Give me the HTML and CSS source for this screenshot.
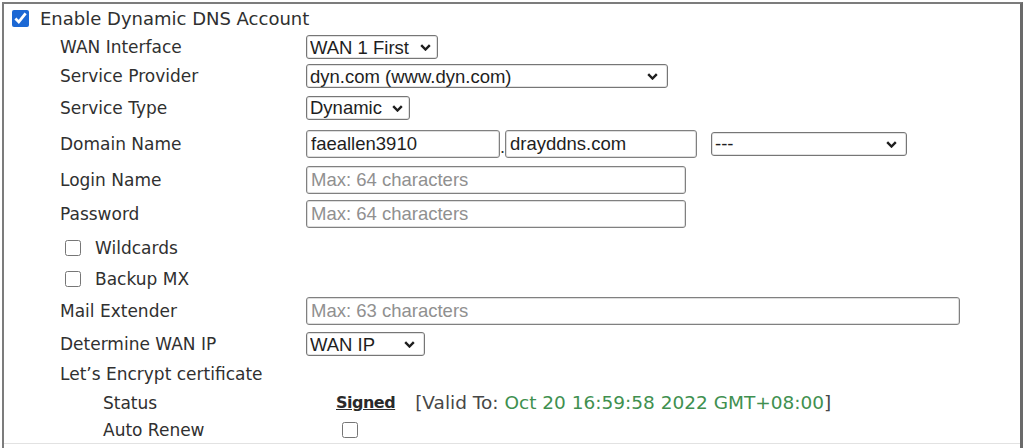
FILE: index.html
```html
<!DOCTYPE html>
<html lang="en">
<head>
<meta charset="utf-8">
<title>Dynamic DNS Account</title>
<link rel="stylesheet" href="styles.css">
</head>
<body>
<div class="frame">
  <div class="form">
    <label class="head span"><input type="checkbox" class="cb cb-main" checked><span>Enable Dynamic DNS Account</span></label>

    <div class="lbl">WAN Interface</div>
    <div class="ctl">
      <span class="sel"><select class="s-wan"><option>WAN 1 First</option></select><svg class="chev chev-near" viewBox="0 0 11 7"><path d="M1.2 1.2 L5.5 5.5 L9.8 1.2"/></svg></span>
    </div>

    <div class="lbl">Service Provider</div>
    <div class="ctl">
      <span class="sel"><select class="s-sp"><option>dyn.com (www.dyn.com)</option></select><svg class="chev" viewBox="0 0 11 7"><path d="M1.2 1.2 L5.5 5.5 L9.8 1.2"/></svg></span>
    </div>

    <div class="lbl">Service Type</div>
    <div class="ctl">
      <span class="sel"><select class="s-st"><option>Dynamic</option></select><svg class="chev chev-near" viewBox="0 0 11 7"><path d="M1.2 1.2 L5.5 5.5 L9.8 1.2"/></svg></span>
    </div>

    <div class="lbl">Domain Name</div>
    <div class="ctl domain">
      <input class="txt t-dn1" type="text" value="faeallen3910"><span class="dot">.</span><input class="txt t-dn2" type="text" value="drayddns.com">
      <span class="sel sel-dn"><select class="s-dn"><option>---</option></select><svg class="chev" viewBox="0 0 11 7"><path d="M1.2 1.2 L5.5 5.5 L9.8 1.2"/></svg></span>
    </div>

    <div class="lbl">Login Name</div>
    <div class="ctl"><input class="txt t-mid" type="text" placeholder="Max: 64 characters"></div>

    <div class="lbl">Password</div>
    <div class="ctl"><input class="txt t-mid" type="password" placeholder="Max: 64 characters"></div>

    <label class="sub span"><input type="checkbox" class="cb cb-sub"><span>Wildcards</span></label>

    <label class="sub span"><input type="checkbox" class="cb cb-sub"><span>Backup MX</span></label>

    <div class="lbl">Mail Extender</div>
    <div class="ctl"><input class="txt t-wide" type="text" placeholder="Max: 63 characters"></div>

    <div class="lbl">Determine WAN IP</div>
    <div class="ctl">
      <span class="sel"><select class="s-dw"><option>WAN IP</option></select><svg class="chev" viewBox="0 0 11 7"><path d="M1.2 1.2 L5.5 5.5 L9.8 1.2"/></svg></span>
    </div>

    <div class="lbl span">Let’s Encrypt certificate</div>

    <div class="lbl lbl-in">Status</div>
    <div class="ctl ctl-in"><span class="signed">Signed</span><span class="valid">[Valid To: <span class="date">Oct 20 16:59:58 2022 GMT+08:00</span>]</span></div>

    <div class="lbl lbl-in">Auto Renew</div>
    <div class="ctl ctl-in"><input type="checkbox" class="cb cb-renew"></div>

    <div class="rest span"></div>
  </div>
</div>
</body>
</html>
```
FILE: styles.css
```css
html, body {
  margin: 0;
  padding: 0;
  background: #ffffff;
}

body {
  font-family: "DejaVu Sans", Verdana, sans-serif;
  color: #303030;
}

.frame {
  margin: 2px 0 0 2px;
  width: 1021px;
  height: 470px;
  box-sizing: border-box;
  border: 2px solid #7c7c7c;
  border-right-width: 3px;
  border-right-color: #6a6a6a;
  border-bottom: none;
  overflow: hidden;
}

.form {
  display: grid;
  grid-template-columns: 302px 1fr;
  grid-template-rows: 29px 28px 30px 33px 39px 33px 36px 32px 30px 34px 32px 28px 29px 26px 40px;
  align-items: center;
}

.span {
  grid-column: 1 / -1;
}

.lbl {
  padding-left: 56px;
  font-size: 17px;
  line-height: 20px;
  white-space: nowrap;
}

.lbl-in {
  padding-left: 99px;
}

.ctl {
  display: flex;
  align-items: center;
}

.ctl-in {
  padding-left: 30px;
}

.head {
  display: flex;
  align-items: center;
  padding-left: 8px;
  font-size: 18px;
  gap: 11px;
}

.sub {
  display: flex;
  align-items: center;
  padding-left: 61px;
  font-size: 17px;
  gap: 14px;
}

.cb {
  margin: 0;
  accent-color: #1c68d4;
}

.cb-main {
  width: 17px;
  height: 17px;
}

.cb-sub {
  width: 16px;
  height: 16px;
}

.cb-renew {
  width: 16px;
  height: 16px;
  margin-left: 6px;
}

/* selects */
.sel {
  position: relative;
  display: inline-flex;
}

.sel select {
  appearance: none;
  -webkit-appearance: none;
  box-sizing: border-box;
  height: 24px;
  margin: 0;
  padding: 0 22px 0 3px;
  border: 1px solid #767676;
  border-radius: 3px;
  box-shadow: inset 0 0 0 1px #e2e2e2;
  background: #ffffff;
  color: #1e1e1e;
  font-family: "Liberation Sans", Arial, sans-serif;
  font-size: 18.5px;
}

.chev {
  position: absolute;
  right: 10px;
  top: 50%;
  width: 11px;
  height: 7px;
  margin-top: -3px;
  pointer-events: none;
}

.chev path {
  fill: none;
  stroke: #1e1e1e;
  stroke-width: 2.4;
}

.chev-near {
  right: 7px;
}

.s-wan { width: 132px; }
.s-sp  { width: 362px; }
.s-st  { width: 104px; }
.s-dw  { width: 119px; }
.s-dn  { width: 196px; height: 25px; color: #666666; font-size: 16px; }

.sel-dn {
  margin-left: 14px;
}

/* text inputs */
.txt {
  box-sizing: border-box;
  height: 28px;
  margin: 0;
  padding: 0 4px;
  border: 1px solid #808080;
  border-radius: 3px;
  box-shadow: inset 0 0 0 1px #dedede;
  background: #ffffff;
  color: #1e1e1e;
  font-family: "Liberation Sans", Arial, sans-serif;
  font-size: 18.5px;
}

.txt::placeholder {
  color: #909090;
}

.t-dn1 { width: 194px; }
.t-dn2 { width: 192px; }
.t-mid { width: 380px; }
.t-wide { width: 654px; }

.dot {
  font-family: "Liberation Sans", Arial, sans-serif;
  font-size: 18px;
  width: 5px;
  align-self: flex-end;
  line-height: 22px;
}

/* certificate status */
.signed {
  font-size: 16px;
  font-weight: bold;
  letter-spacing: -0.5px;
  text-decoration: underline;
  color: #2a2a2a;
  margin-right: 20px;
}

.valid {
  font-size: 18.5px;
  color: #474747;
  white-space: nowrap;
}

.date {
  color: #40904f;
}

.rest {
  align-self: start;
  height: 40px;
  border-top: 1px solid #e2e2e2;
}
```
